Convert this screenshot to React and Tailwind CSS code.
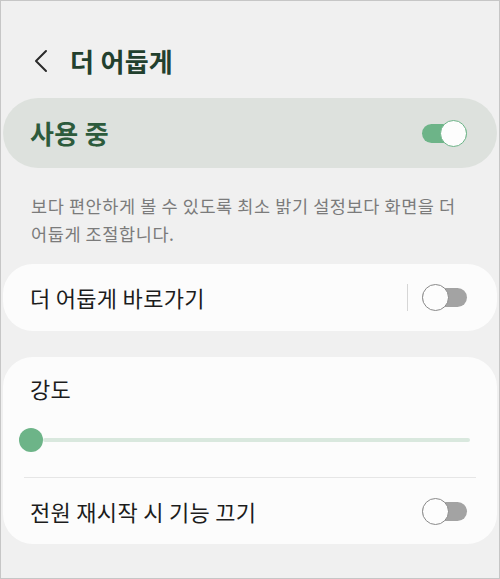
import React from "react";

const Toggle = ({ on }) => (
  <div className="relative w-[45px] h-[27px] flex items-center shrink-0">
    <div className={`w-full h-[19px] rounded-full ${on ? "bg-[#6db488]" : "bg-[#a3a3a3]"}`} />
    <div
      className={`absolute top-0 size-[27px] rounded-full bg-[#fdfdfd] border-[1.5px] ${
        on ? "right-0 border-[#6db488]" : "left-0 border-[#8a8a8a]"
      }`}
    />
  </div>
);

export default function App() {
  return (
    <div
      className="w-[500px] h-[579px] border border-[#c6c6c6] bg-[#f0f0f0] px-[2px] flex flex-col overflow-hidden break-keep"
      style={{ fontFamily: '"Noto Sans CJK KR", "Noto Sans", sans-serif' }}
    >
      <div className="mt-[35px] h-[50px] flex items-center pl-[31px]">
        <svg width="14" height="24" viewBox="0 0 14 24" fill="none">
          <polyline points="12,2 2,12 12,22" stroke="#2b2b2b" strokeWidth="2" strokeLinecap="round" strokeLinejoin="round" />
        </svg>
        <span className="ml-[22px] text-[26px] font-bold tracking-[0.3px] text-[#22402e] leading-none">더 어둡게</span>
      </div>

      <div className="mt-[12px] h-[70px] rounded-full bg-[#dde1dd] flex items-center justify-between pl-[27px] pr-[30px]">
        <span className="text-[26px] font-bold tracking-[0.3px] text-[#2d5b3c] leading-none">사용 중</span>
        <Toggle on />
      </div>

      <p className="mt-[24px] px-[28px] text-[17.5px] tracking-[0.6px] leading-[28px] text-[#7b7b7b]">
        보다 편안하게 볼 수 있도록 최소 밝기 설정보다 화면을 더 어둡게 조절합니다.
      </p>

      <div className="mt-[16px] h-[67px] rounded-[30px] bg-[#fcfcfc] flex items-center pl-[27px] pr-[30px]">
        <span className="flex-1 text-[22px] tracking-[0.3px] text-[#1c1c1c]">더 어둡게 바로가기</span>
        <div className="w-px h-[27px] bg-[#d6d6d6] mr-[14px]" />
        <Toggle on={false} />
      </div>

      <div className="mt-[26px] rounded-[30px] bg-[#fcfcfc] flex flex-col">
        <div className="pt-[17px] pl-[27px] text-[22px] tracking-[0.3px] leading-[28px] text-[#1c1c1c]">강도</div>
        <div className="mt-[26px] h-[24px] flex items-center pl-[16px] pr-[27px]">
          <div className="size-[24px] rounded-full bg-[#6db488] shrink-0" />
          <div className="flex-1 h-[4px] bg-[#d9e8de] rounded-full" />
        </div>
        <div className="mt-[25px] mx-[21px] h-px bg-[#e6e6e6]" />
        <div className="h-[66px] flex items-center justify-between pl-[27px] pr-[30px]">
          <span className="text-[22px] tracking-[0.3px] text-[#1c1c1c]">전원 재시작 시 기능 끄기</span>
          <Toggle on={false} />
        </div>
      </div>
    </div>
  );
}
